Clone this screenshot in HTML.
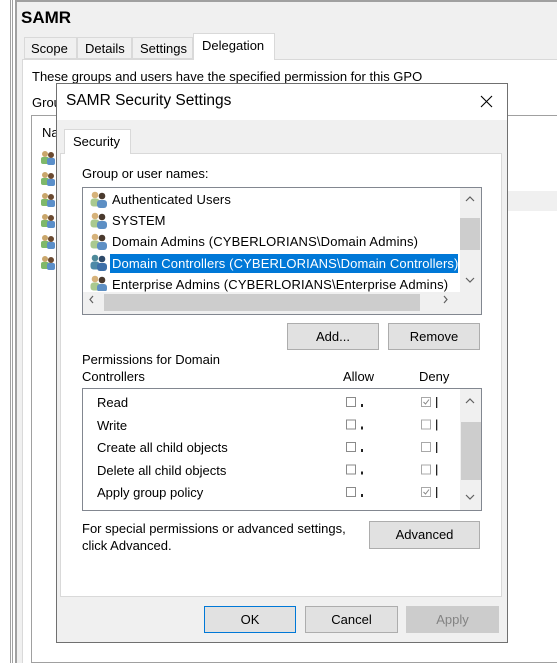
<!DOCTYPE html>
<html><head><meta charset="utf-8"><style>
*{margin:0;padding:0;box-sizing:border-box}
body{width:557px;height:663px;position:relative;overflow:hidden;background:#fff;font-family:"Liberation Sans",sans-serif;font-size:13px;color:#000}
.a{position:absolute}
.t{position:absolute;white-space:nowrap;line-height:15px}
.btn{position:absolute;background:#e1e1e1;border:1px solid #adadad;text-align:center;line-height:25px;font-size:13px}
</style></head><body>
<div class="a" style="left:10px;top:0;width:1px;height:663px;background:#a0a0a0"></div>
<div class="a" style="left:12px;top:0;width:1px;height:663px;background:#a0a0a0"></div>
<div class="a" style="left:15px;top:0;width:542px;height:663px;background:#f0f0f0;border-left:2px solid #a0a0a0;border-top:2px solid #a0a0a0"></div>
<div class="t" style="left:21px;top:10px;font-size:17px;font-weight:bold">SAMR</div>
<div class="a" style="left:22px;top:59px;width:535px;height:604px;background:#fff;border-top:1px solid #d9d9d9;border-left:1px solid #d9d9d9"></div>
<div class="a" style="left:24px;top:37px;width:53px;height:22px;border:1px solid #d9d9d9;background:#f0f0f0"></div>
<div class="t" style="left:31px;top:41px">Scope</div>
<div class="a" style="left:77px;top:37px;width:55px;height:22px;border:1px solid #d9d9d9;background:#f0f0f0"></div>
<div class="t" style="left:85px;top:41px">Details</div>
<div class="a" style="left:132px;top:37px;width:61px;height:22px;border:1px solid #d9d9d9;background:#f0f0f0"></div>
<div class="t" style="left:140px;top:41px">Settings</div>
<div class="a" style="left:193px;top:33px;width:82px;height:27px;border:1px solid #d9d9d9;border-bottom:none;background:#fff"></div>
<div class="t" style="left:202px;top:38px">Delegation</div>
<div class="t" style="left:32px;top:69px">These groups and users have the specified permission for this GPO</div>
<div class="t" style="left:32px;top:95px">Grou</div>
<div class="a" style="left:31px;top:115px;width:526px;height:548px;border:1px solid #a0a0a0;border-right:none;background:#fff"></div>
<div class="t" style="left:42px;top:125px">Na</div>
<div class="a" style="left:480px;top:191px;width:77px;height:20px;background:#f0f0f0"></div>
<svg class="a" style="left:40px;top:150px" width="16" height="125">
<g id="p"><circle cx="5" cy="4" r="3" fill="#c9a66b"/><rect x="1" y="7" width="8" height="7" rx="2" fill="#7fb86a"/><circle cx="11" cy="5" r="3" fill="#6b4a30"/><rect x="7" y="8" width="8" height="7" rx="2" fill="#5b8fc9"/></g>
<use href="#p" y="21"/><use href="#p" y="42"/><use href="#p" y="63"/><use href="#p" y="84"/><use href="#p" y="105"/>
</svg>
<div class="a" style="left:56px;top:83px;width:452px;height:560px;background:#f0f0f0;border:1px solid #707070"></div>
<div class="a" style="left:57px;top:84px;width:450px;height:36px;background:#fff"></div>
<div class="t" style="left:66px;top:92px;font-size:15.5px;line-height:18px">SAMR Security Settings</div>
<svg class="a" style="left:480px;top:95px" width="13" height="13"><path d="M1 1L12 12M12 1L1 12" stroke="#000" stroke-width="1.1"/></svg>
<div class="a" style="left:60px;top:153px;width:442px;height:444px;background:#fff;border:1px solid #d9d9d9"></div>
<div class="a" style="left:64px;top:129px;width:67px;height:25px;background:#fff;border:1px solid #d9d9d9;border-bottom:none"></div>
<div class="t" style="left:73px;top:134px">Security</div>
<div class="t" style="left:82px;top:166px">Group or user names:</div>
<div class="a" style="left:82px;top:187px;width:400px;height:128px;border:1px solid #828790;background:#fff"></div>
<div class="a" style="left:460px;top:188px;width:21px;height:104px;background:#f0f0f0"></div>
<div class="a" style="left:460px;top:218px;width:20px;height:32px;background:#cdcdcd"></div>
<div class="a" style="left:83px;top:292px;width:398px;height:22px;background:#f0f0f0"></div>
<div class="a" style="left:104px;top:294px;width:316px;height:17px;background:#cdcdcd"></div>
<svg class="a" style="left:83px;top:188px" width="398" height="126" fill="none" stroke="#606060" stroke-width="1.2">
<path d="M383 13L387 9L391 13"/><path d="M383 90L387 94L391 90"/>
<path d="M10 108L7 111.5L10 115"/><path d="M361 108L364 111.5L361 115"/>
</svg>
<div class="a" style="left:110px;top:254px;width:348px;height:19px;background:#0078d7"></div>
<svg class="a" style="left:89px;top:191px" width="20" height="100">
<g id="q"><circle cx="6" cy="4" r="3.3" fill="#d6b27a"/><rect x="1.5" y="7.5" width="9" height="8" rx="3" fill="#a9c98f"/><circle cx="13" cy="5" r="3.3" fill="#4a3a2e"/><rect x="8" y="9" width="10" height="8" rx="3" fill="#5d8fc4"/></g>
<use href="#q" y="21"/><use href="#q" y="42"/>
<g transform="translate(0,63)"><circle cx="6" cy="4" r="3.3" fill="#4e8a9a"/><rect x="1.5" y="7.5" width="9" height="8" rx="3" fill="#4e8aa8"/><circle cx="13" cy="5" r="3.3" fill="#2e4a6a"/><rect x="8" y="9" width="10" height="8" rx="3" fill="#3d6fa8"/></g>
<use href="#q" y="84"/>
</svg>
<div class="t" style="left:112px;top:192px;letter-spacing:0.1px">Authenticated Users</div>
<div class="t" style="left:112px;top:213px">SYSTEM</div>
<div class="t" style="left:112px;top:234px;letter-spacing:0.15px">Domain Admins (CYBERLORIANS\Domain Admins)</div>
<div class="t" style="left:112px;top:256px;color:#fff;letter-spacing:0.12px">Domain Controllers (CYBERLORIANS\Domain Controllers)</div>
<div class="a" style="left:83px;top:275px;width:377px;height:17px;overflow:hidden"><div class="t" style="left:29px;top:2px;letter-spacing:0.15px">Enterprise Admins (CYBERLORIANS\Enterprise Admins)</div></div>
<div class="btn" style="left:287px;top:323px;width:92px;height:27px">Add...</div>
<div class="btn" style="left:388px;top:323px;width:92px;height:27px">Remove</div>
<div class="t" style="left:82px;top:352px">Permissions for Domain</div>
<div class="t" style="left:82px;top:369px">Controllers</div>
<div class="t" style="left:343px;top:369px">Allow</div>
<div class="t" style="left:419px;top:369px">Deny</div>
<div class="a" style="left:82px;top:388px;width:400px;height:123px;border:1px solid #828790;background:#fff;overflow:hidden">
<div class="a" style="left:377px;top:0;width:21px;height:121px;background:#f0f0f0"></div>
<div class="a" style="left:378px;top:33px;width:20px;height:58px;background:#cdcdcd"></div>
<svg class="a" style="left:377px;top:0" width="21" height="121" fill="none" stroke="#606060" stroke-width="1.2"><path d="M6 14L10 10L14 14"/><path d="M6 106L10 110L14 106"/></svg>
</div>
<div class="t" style="left:97px;top:395px">Read</div>
<div class="t" style="left:97px;top:418px">Write</div>
<div class="t" style="left:97px;top:440px">Create all child objects</div>
<div class="t" style="left:97px;top:463px">Delete all child objects</div>
<div class="t" style="left:97px;top:485px">Apply group policy</div>
<svg class="a" style="left:340px;top:394px" width="110" height="116">
<g id="r"><rect x="6.5" y="3.5" width="9" height="9" fill="#fff" stroke="#8a8a8a"/><rect x="21" y="10" width="2" height="3" fill="#222"/><rect x="81.5" y="3.5" width="9" height="9" fill="#fff" stroke="#a8a8a8"/><rect x="96" y="3" width="1.3" height="11" fill="#222"/></g>
<use href="#r" y="22.5"/><use href="#r" y="45"/><use href="#r" y="67.5"/><use href="#r" y="90"/>
<path d="M83.5 8L85.5 10L89 5.5" stroke="#888" fill="none"/><path d="M83.5 98L85.5 100L89 95.5" stroke="#888" fill="none"/>
</svg>
<div class="t" style="left:82px;top:521px">For special permissions or advanced settings,</div>
<div class="t" style="left:82px;top:538px">click Advanced.</div>
<div class="btn" style="left:369px;top:521px;width:111px;height:28px">Advanced</div>
<div class="btn" style="left:204px;top:606px;width:92px;height:27px;border-color:#0078d7">OK</div>
<div class="btn" style="left:305px;top:606px;width:93px;height:27px">Cancel</div>
<div class="btn" style="left:406px;top:606px;width:93px;height:27px;background:#cccccc;border-color:#cccccc;color:#838383">Apply</div>
</body></html>
